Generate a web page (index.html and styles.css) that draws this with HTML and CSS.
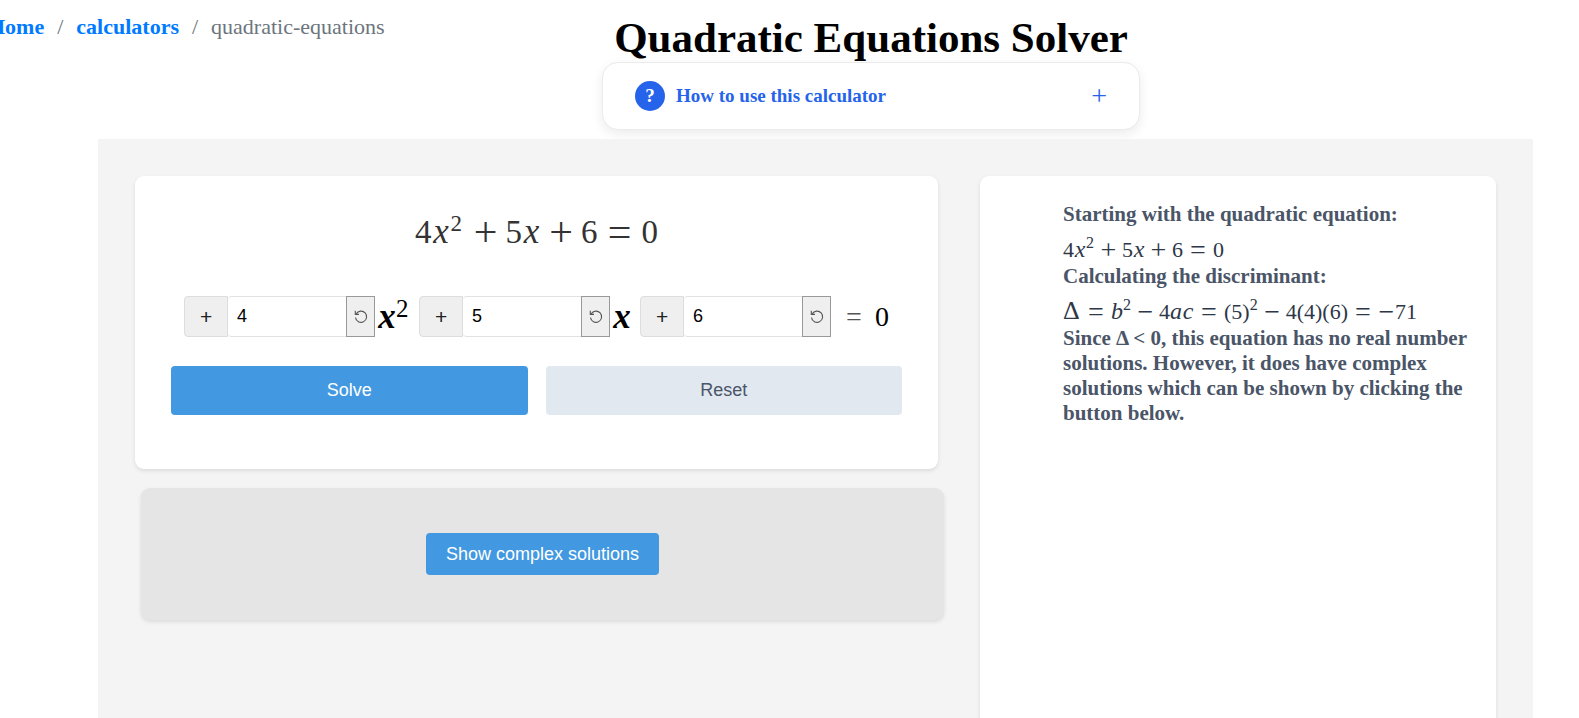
FILE: index.html
```html
<!DOCTYPE html>
<html lang="en">
<head>
<meta charset="utf-8">
<title>Quadratic Equations Solver</title>
<link rel="stylesheet" href="styles.css">
</head>
<body>
<svg class="sprite" aria-hidden="true">
  <symbol id="undo" viewBox="0 0 14 14">
    <path d="M2.2 3.9A5.6 5.6 0 1 1 1.5 7.6" fill="none" stroke="currentColor" stroke-width="1.1"/>
    <path d="M1.3 .8V4.4H5" fill="none" stroke="currentColor" stroke-width="1.1"/>
  </symbol>
</svg>
<header class="top">
  <nav class="crumbs" aria-label="Breadcrumb">
    <a href="#">Home</a><span class="sep">/</span><a href="#">calculators</a><span class="sep">/</span><span class="here">quadratic-equations</span>
  </nav>
  <div class="heading">
    <h1 class="title">Quadratic Equations Solver</h1>
    <button class="howto" type="button" aria-expanded="false">
      <span class="badge">?</span>
      <span class="howto-label">How to use this calculator</span>
      <span class="howto-plus">+</span>
    </button>
  </div>
</header>
<main class="panel">
  <div class="left">
    <section class="card solver">
      <div class="math math-lg"><span>4</span><i>x</i><sup>2</sup><b>+</b><span>5</span><i>x</i><b>+</b><span>6</span><b class="rel">=</b><span>0</span></div>
      <form class="form">
        <div class="terms">
          <div class="group">
            <button class="sign" type="button" aria-label="Sign of a">+</button>
            <input class="coef" type="text" value="4" aria-label="Coefficient a">
            <button class="undo" type="button" aria-label="Clear a"><svg><use href="#undo"/></svg></button>
          </div>
          <div class="unit math"><i>x</i><sup>2</sup></div>
          <div class="group">
            <button class="sign" type="button" aria-label="Sign of b">+</button>
            <input class="coef" type="text" value="5" aria-label="Coefficient b">
            <button class="undo" type="button" aria-label="Clear b"><svg><use href="#undo"/></svg></button>
          </div>
          <div class="unit math"><i>x</i></div>
          <div class="group">
            <button class="sign" type="button" aria-label="Sign of c">+</button>
            <input class="coef" type="text" value="6" aria-label="Coefficient c">
            <button class="undo" type="button" aria-label="Clear c"><svg><use href="#undo"/></svg></button>
          </div>
          <div class="equals"><span class="eq">=</span><span class="zero">0</span></div>
        </div>
        <div class="actions">
          <button class="btn primary" type="button">Solve</button>
          <button class="btn secondary" type="reset">Reset</button>
        </div>
      </form>
    </section>
    <section class="card result">
      <button class="btn primary compact" type="button">Show complex solutions</button>
    </section>
  </div>
  <section class="card steps">
    <p>Starting with the quadratic equation:</p>
    <div class="math math-sm"><span>4</span><i>x</i><sup>2</sup><b>+</b><span>5</span><i>x</i><b>+</b><span>6</span><b class="rel">=</b><span>0</span></div>
    <p>Calculating the discriminant:</p>
    <div class="math math-sm"><span class="delta">Δ</span><b class="rel">=</b><i>b</i><sup>2</sup><b>−</b><span>4</span><i>a</i><i>c</i><b class="rel">=</b><span>(5)</span><sup>2</sup><b>−</b><span>4(4)(6)</span><b class="rel">=</b><b class="neg">−</b><span>71</span></div>
    <p>Since Δ &lt; 0, this equation has no real number solutions. However, it does have complex solutions which can be shown by clicking the button below.</p>
  </section>
</main>
</body>
</html>
```
FILE: styles.css
```css
* { box-sizing: border-box; }
body {
  margin: 0;
  min-height: 100vh;
  display: flex;
  flex-direction: column;
  background: #fff;
  color: #000;
  font-family: "Liberation Serif", "Times New Roman", serif;
  font-size: 21px;
  overflow-x: hidden;
}
button, input { font-family: "Liberation Sans", Arial, sans-serif; font-size: 18px; margin: 0; }
.sprite { display: none; }

.top { display: grid; grid-template-columns: minmax(0, 1fr) 538px 439px; }
.crumbs {
  display: flex;
  margin-left: -12px;
  padding-top: 14px;
  font-size: 22px;
  line-height: 25px;
  white-space: nowrap;
}
.crumbs a { color: #007bff; font-weight: bold; text-decoration: none; }
.sep { padding: 0 13px; color: #6c757d; }
.here { color: #6c757d; }

.title { margin: 0; padding-top: 14px; font-size: 43px; line-height: 48px; text-align: center; white-space: nowrap; }
.howto {
  display: flex;
  align-items: center;
  gap: 11px;
  width: 100%;
  height: 68px;
  padding: 0 32px;
  border: 1px solid #ebebeb;
  border-radius: 16px;
  background: #fff;
  box-shadow: 0 4px 12px rgba(0, 0, 0, .08);
  color: #2563eb;
  font-family: inherit;
  font-size: 19px;
  font-weight: bold;
}
.badge {
  display: grid;
  place-items: center;
  width: 30px;
  height: 30px;
  border-radius: 50%;
  background: #2563eb;
  color: #fff;
}
.howto-plus { margin-left: auto; font-size: 28px; font-weight: normal; }

.panel {
  flex: 1;
  display: grid;
  grid-template-columns: minmax(0, 803fr) minmax(0, 516fr);
  gap: 42px;
  margin: 9px 46px 0 98px;
  padding: 37px 37px 0;
  background: #f4f4f4;
}
.card { border-radius: 9px; background: #fff; box-shadow: 0 2px 4px rgba(0, 0, 0, .1); }
.solver { padding: 36px 36px 54px; display: flex; flex-direction: column; align-items: center; }
.result { display: grid; place-items: center; margin: 19px -6px 0 6px; padding: 45px; background: #e5e5e5; }
.steps { min-height: 560px; padding: 26px 20px 26px 83px; border-radius: 9px 9px 0 0; color: #4a5568; font-weight: bold; line-height: 25px; }
.steps p { margin: 0; }

.math { display: flex; align-items: baseline; font-weight: normal; white-space: pre; }
.math b { align-self: center; font-weight: normal; text-align: center; }
.math sup { align-self: flex-start; line-height: 1; vertical-align: baseline; }
.math i { text-align: center; }

.math-lg { font-size: 33px; line-height: 40px; color: #333; }
.math-lg i { width: 19px; font-size: 35px; }
.math-lg sup { width: 15px; font-size: 23px; }
.math-lg b { width: 40px; font-size: 42px; }
.math-lg .rel { width: 44px; }

.math-sm { padding-top: 8px; font-size: 22px; line-height: 28px; color: #2d3748; }
.math-sm i { width: 12px; font-size: 24px; }
.math-sm sup { width: 9px; font-size: 16px; }
.math-sm b { width: 27px; font-size: 28px; }
.math-sm .rel { width: 30px; }
.math-sm .neg { width: 17px; }
.math-sm .delta { width: 18px; font-size: 26px; }

.form { width: 100%; margin-top: 44px; }
.terms { display: flex; justify-content: center; align-items: center; }
.group { display: flex; height: 41px; }
.sign { width: 44px; padding: 0; border: 1px solid #ddd; border-radius: 4px 0 0 4px; background: #efefef; color: #222; font-size: 21px; }
.coef { width: 118px; padding: 0 9px; border: 1px solid #e2e2e2; border-left: 0; border-right: 0; border-radius: 4px 0 0 4px; background: #fff; color: #000; outline: 0; }
.undo { display: grid; place-items: center; width: 29px; padding: 0; border: 1px solid #999; background: #efefef; color: #555; }
.undo svg { width: 14px; height: 14px; }
.unit { height: 41px; line-height: 41px; padding: 0 9px 0 3px; }
.unit i { width: 18px; font-size: 35px; font-weight: bold; }
.unit sup { width: 14px; font-size: 25px; }
.equals { display: flex; align-items: center; padding-left: 15px; gap: 13px; font-size: 28px; line-height: 38px; }
.eq { color: #555; }

.actions { display: grid; grid-template-columns: 1fr 1fr; gap: 18px; margin-top: 29px; }
.btn { height: 49px; padding: 0 18px; border: 0; border-radius: 4px; }
.primary { background: #4299e1; color: #fff; }
.secondary { background: #e2e8f0; color: #4a5568; }
.compact { height: 42px; padding: 0 20px; }
```
